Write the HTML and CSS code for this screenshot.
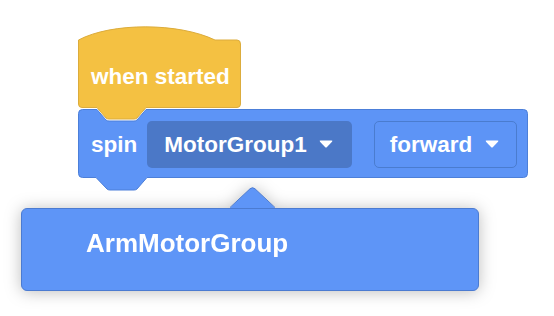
FILE: index.html
```html
<!DOCTYPE html>
<html>
<head>
<meta charset="utf-8">
<link rel="stylesheet" href="styles.css">
</head>
<body>
<div class="workspace">
  <div class="script">
    <div class="block hat">
      <svg class="shape" width="163" height="93" viewBox="0 0 163 93">
        <path d="M0.5,13 C34,-4.8 101,-4.3 137,13 L159,13 Q162.5,13 162.5,17 L162.5,77 Q162.5,80.5 159,80.5 L68,80.5 L59,91 Q58,92 56,92 L31,92 Q29,92 28,91 L19,80.5 L4,80.5 Q0.5,80.5 0.5,77 Z" fill="#f4c142" stroke="#dcac3c" stroke-width="1"/>
      </svg>
      <span class="label hat-label">when started</span>
    </div>
    <div class="block stack">
      <svg class="shape" width="450" height="82" viewBox="0 0 450 82">
        <path d="M0.5,4.5 Q0.5,0.5 4.5,0.5 L19,0.5 L28,11 Q29,12 31,12 L56,12 Q58,12 59,11 L68,0.5 L445.5,0.5 Q449.5,0.5 449.5,4.5 L449.5,64.5 Q449.5,68.5 445.5,68.5 L69,68.5 L59,80 Q58,81 56,81 L32,81 Q30,81 29,80 L18,68.5 L4.5,68.5 Q0.5,68.5 0.5,64.5 Z" fill="#5d94f6" stroke="#4c7fd9" stroke-width="1"/>
      </svg>
      <div class="row">
        <span class="label">spin</span>
        <div class="dropdown dark">
          <span class="label">MotorGroup1</span>
          <svg class="caret" width="14" height="8" viewBox="0 0 14 8"><path d="M1.5,0.5 L12.5,0.5 Q14,0.5 13,1.8 L8,7 Q7,8 6,7 L1,1.8 Q0,0.5 1.5,0.5 Z" fill="#ffffff"/></svg>
        </div>
        <div class="dropdown outline">
          <span class="label">forward</span>
          <svg class="caret" width="14" height="8" viewBox="0 0 14 8"><path d="M1.5,0.5 L12.5,0.5 Q14,0.5 13,1.8 L8,7 Q7,8 6,7 L1,1.8 Q0,0.5 1.5,0.5 Z" fill="#ffffff"/></svg>
        </div>
      </div>
    </div>
  </div>

  <div class="popup">
    <svg class="pointer" width="48" height="22" viewBox="0 0 48 22">
      <path d="M1,21 L21,1.8 Q23.5,-0.4 26,1.8 L46,21 Z" fill="#5e95f7"/>
      <path d="M1,20.5 L21,1.8 Q23.5,-0.4 26,1.8 L46,20.5" fill="none" stroke="#4b7bd1" stroke-width="1"/>
    </svg>
    <div class="menu">
      <span class="menu-item">ArmMotorGroup</span>
    </div>
  </div>
</div>
</body>
</html>
```

FILE: styles.css
```css
* {
  box-sizing: border-box;
}

html, body {
  margin: 0;
  padding: 0;
  background: #ffffff;
}

body {
  font-family: "Liberation Sans", Arial, Helvetica, sans-serif;
  color: #ffffff;
}

.workspace {
  position: relative;
  width: 554px;
  height: 316px;
  overflow: hidden;
}

.script {
  position: absolute;
  left: 78px;
  top: 27px;
  display: flex;
  flex-direction: column;
}

.block {
  position: relative;
}

.shape {
  position: absolute;
  left: 0;
  top: 0;
  overflow: visible;
}

.label {
  position: relative;
  font-size: 22.5px;
  font-weight: bold;
  line-height: 25px;
  white-space: nowrap;
}

.hat {
  width: 163px;
  height: 81px;
  z-index: 2;
  padding: 37px 0 0 13px;
}

.stack {
  width: 450px;
  height: 69px;
  margin-top: 1px;
  z-index: 1;
}

.row {
  position: relative;
  display: flex;
  align-items: center;
  height: 69px;
  padding: 1px 0 0 13px;
}

.dropdown {
  display: flex;
  align-items: center;
  height: 47px;
  border-radius: 5px;
}

.dropdown .caret {
  display: block;
}

.dark {
  margin-left: 10px;
  background: #4b78c7;
  padding: 0 19px 0 17px;
  gap: 12px;
}

.outline {
  margin-left: 22px;
  background: #5d94f6;
  border: 1px solid #4a7ccf;
  padding: 0 17px 0 15px;
  gap: 13px;
}

.popup {
  position: absolute;
  left: 21px;
  top: 187px;
  width: 458px;
  filter: drop-shadow(0 1px 8px rgba(0, 0, 0, 0.26));
}

.pointer {
  display: block;
  margin-left: 208px;
  margin-bottom: -1px;
  position: relative;
  z-index: 2;
}

.menu {
  height: 83px;
  background: #5e95f7;
  border: 1px solid #4b7bd1;
  border-radius: 6px;
  padding: 19px 0 0 64px;
}

.menu-item {
  font-size: 26px;
  font-weight: bold;
  line-height: 30px;
  white-space: nowrap;
}
```
